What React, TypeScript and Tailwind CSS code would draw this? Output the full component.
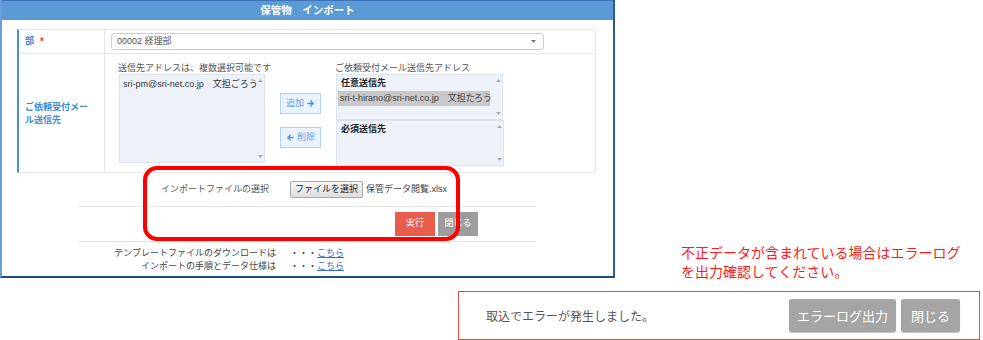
import { ArrowLeft, ArrowRight } from "lucide-react";

const ja = "font-['Liberation_Sans','Noto_Sans_CJK_JP',sans-serif]";

function ScrollArrows() {
  return (
    <div className="flex flex-col justify-between items-center w-[8px] py-[4px]">
      <svg width="5" height="3" viewBox="0 0 5 3">
        <path d="M2.5 0L5 3H0z" fill="#a8a8a8" />
      </svg>
      <svg width="5" height="3" viewBox="0 0 5 3">
        <path d="M0 0h5L2.5 3z" fill="#a8a8a8" />
      </svg>
    </div>
  );
}

function ImportPanel() {
  return (
    <div className="w-[615px] h-[278px] shrink-0 border-l-2 border-l-[#6a9ed8] border-r-2 border-r-[#2b5b9f] border-b-2 border-b-[#1f4a8a] bg-white">
      {/* Header */}
      <div className="h-[20px] bg-[#5b9ad5] border-t border-t-[#3f74ba] text-center text-white font-bold text-[10.5px] leading-[19px]">
        保管物　インポート
      </div>

      {/* Form table */}
      <div className="ml-[15px] mt-[9px] w-[579px] border border-[#e6e6e6] border-l-2 border-l-[#4a8bd3]">
        <div className="flex h-[24px] border-b border-[#e6e6e6]">
          <div className="w-[86px] border-r border-[#e6e6e6] pl-[6px] flex items-center gap-[6px] text-[9px] font-bold text-[#3d8ad3]">
            部<span className="text-[#ff3b3b] text-[10px]">*</span>
          </div>
          <div className="flex items-center pl-[6px]">
            <div className="w-[433px] h-[17px] border border-[#cfcfcf] rounded-[3px] flex items-center justify-between px-[5px] text-[9px] text-[#555]">
              <span>00002 経理部</span>
              <svg width="5" height="3" viewBox="0 0 5 3" className="mr-[2px]">
                <path d="M0 0h5L2.5 3z" fill="#777" />
              </svg>
            </div>
          </div>
        </div>

        <div className="flex h-[118px]">
          <div className="w-[86px] border-r border-[#e6e6e6] pl-[6px] flex items-center">
            <div className="w-[66px] text-[9px] leading-[13px] font-bold text-[#3d8ad3] pt-[2px]">
              ご依頼受付メール送信先
            </div>
          </div>
          <div className="flex pl-[13px] pt-[8px]">
            <div className="w-[147px] flex flex-col">
              <div className="h-[12px] text-[9px] leading-[12px] text-[#555] whitespace-nowrap">
                送信先アドレスは、複数選択可能です
              </div>
              <div className="ml-[1px] w-[146px] h-[89px] bg-[#edf1f8] border border-[#dde4ee] flex justify-between">
                <div className="pl-[3px] pt-[3px] text-[9px] leading-[13px] text-[#333] whitespace-nowrap">
                  sri-pm@sri-net.co.jp　文担ごろう
                </div>
                <ScrollArrows />
              </div>
            </div>

            <div className="ml-[15px] mt-[31px] flex flex-col gap-[13px]">
              <div className="w-[41px] h-[21px] bg-[#eaf3fc] border border-[#b3d2ef] flex items-center justify-center gap-[2px] text-[9px] text-[#6aa3dc]">
                追加
                <ArrowRight size={9} strokeWidth={3.5} color="#4d8fd4" />
              </div>
              <div className="w-[41px] h-[21px] bg-[#eaf3fc] border border-[#b3d2ef] flex items-center justify-center gap-[2px] text-[9px] text-[#6aa3dc]">
                <ArrowLeft size={9} strokeWidth={3.5} color="#4d8fd4" />
                削除
              </div>
            </div>

            <div className="ml-[14px] flex flex-col">
              <div className="h-[12px] text-[9px] leading-[12px] text-[#555] whitespace-nowrap">
                ご依頼受付メール送信先アドレス
              </div>
              <div className="ml-[1px] w-[167px] h-[46px] bg-[#eef2f9] border border-[#dde4ee] flex justify-between">
                <div className="pl-[1px] pt-[2px]">
                  <div className="pl-[3px] text-[9px] leading-[13px] font-bold text-[#222]">任意送信先</div>
                  <div className="mt-[1px] w-[152px] h-[15px] bg-[#c8c8c8] pl-[2px] text-[9px] leading-[15px] text-[#444] whitespace-nowrap">
                    sri-t-hirano@sri-net.co.jp　文担たろう
                  </div>
                </div>
                <ScrollArrows />
              </div>
              <div className="ml-[1px] w-[168px] h-[46px] bg-[#eef2f9] border border-[#dde4ee] flex justify-between">
                <div className="pl-[4px] pt-[2px] text-[9px] leading-[13px] font-bold text-[#222]">必須送信先</div>
                <ScrollArrows />
              </div>
            </div>
          </div>
        </div>
      </div>

      {/* Import section */}
      <div className="mx-auto w-[457px]">
        <div className="mt-[8px] h-[17px] flex items-center pl-[82px] text-[9px]">
          <div className="w-[129px] text-[#555]">インポートファイルの選択</div>
          <div className="h-[17px] px-[4px] flex items-center border border-[#a9a9a9] rounded-[2px] bg-linear-to-b from-[#f6f6f6] to-[#dedede] text-[#222]">
            ファイルを選択
          </div>
          <div className="ml-[3px] text-[#444]">保管データ閲覧.xlsx</div>
        </div>
        <div className="mt-[8px] border-t border-[#e6e6e6]" />
        <div className="mt-[5px] flex gap-[3px] pl-[316px] text-[9px] text-white">
          <div className="w-[40px] h-[24px] bg-[#e95b4b] flex items-center justify-center">実行</div>
          <div className="w-[40px] h-[24px] bg-[#9d9d9d] flex items-center justify-center">閉じる</div>
        </div>
        <div className="mt-[5px] border-t border-[#e6e6e6]" />
        <div className="mt-[5px] grid grid-cols-[197px_auto] gap-x-[14px] text-[9px] leading-[13px] text-[#444]">
          <div className="text-right">テンプレートファイルのダウンロードは</div>
          <div>
            ・・・<span className="text-[#2f6fd0] underline">こちら</span>
          </div>
          <div className="text-right">インポートの手順とデータ仕様は</div>
          <div>
            ・・・<span className="text-[#2f6fd0] underline">こちら</span>
          </div>
        </div>
      </div>
    </div>
  );
}

export default function App() {
  return (
    <div className={`relative w-[983px] h-[340px] bg-white overflow-hidden ${ja}`}>
      <div className="flex h-[278px]">
        <ImportPanel />
        <div className="pl-[66px] pt-[243px] text-[14px] leading-[19px] text-[#ff1a1a] font-['Noto_Sans_CJK_JP',sans-serif]">
          <div>不正データが含まれている場合はエラーログ</div>
          <div>を出力確認してください。</div>
        </div>
      </div>

      {/* Error dialog */}
      <div className="ml-[458px] mt-[13px] w-[522px] h-[49px] border border-[#e44a4a] flex items-center justify-between pl-[27px] pr-[19px] font-['Noto_Sans_CJK_JP',sans-serif]">
        <div className="text-[12px] text-[#555]">取込でエラーが発生しました。</div>
        <div className="flex gap-[5px] text-[13px] text-white">
          <div className="w-[107px] h-[33px] rounded-[3px] bg-[#a5a5a5] shadow-[0_1px_1px_rgba(0,0,0,0.25)] flex items-center justify-center">
            エラーログ出力
          </div>
          <div className="w-[59px] h-[33px] rounded-[3px] bg-[#a5a5a5] shadow-[0_1px_1px_rgba(0,0,0,0.25)] flex items-center justify-center">
            閉じる
          </div>
        </div>
      </div>

      {/* Annotation highlight */}
      <div className="absolute left-[143px] top-[166px] w-[317px] h-[75px] border-4 border-[#ff0000] rounded-[14px]" />
    </div>
  );
}
